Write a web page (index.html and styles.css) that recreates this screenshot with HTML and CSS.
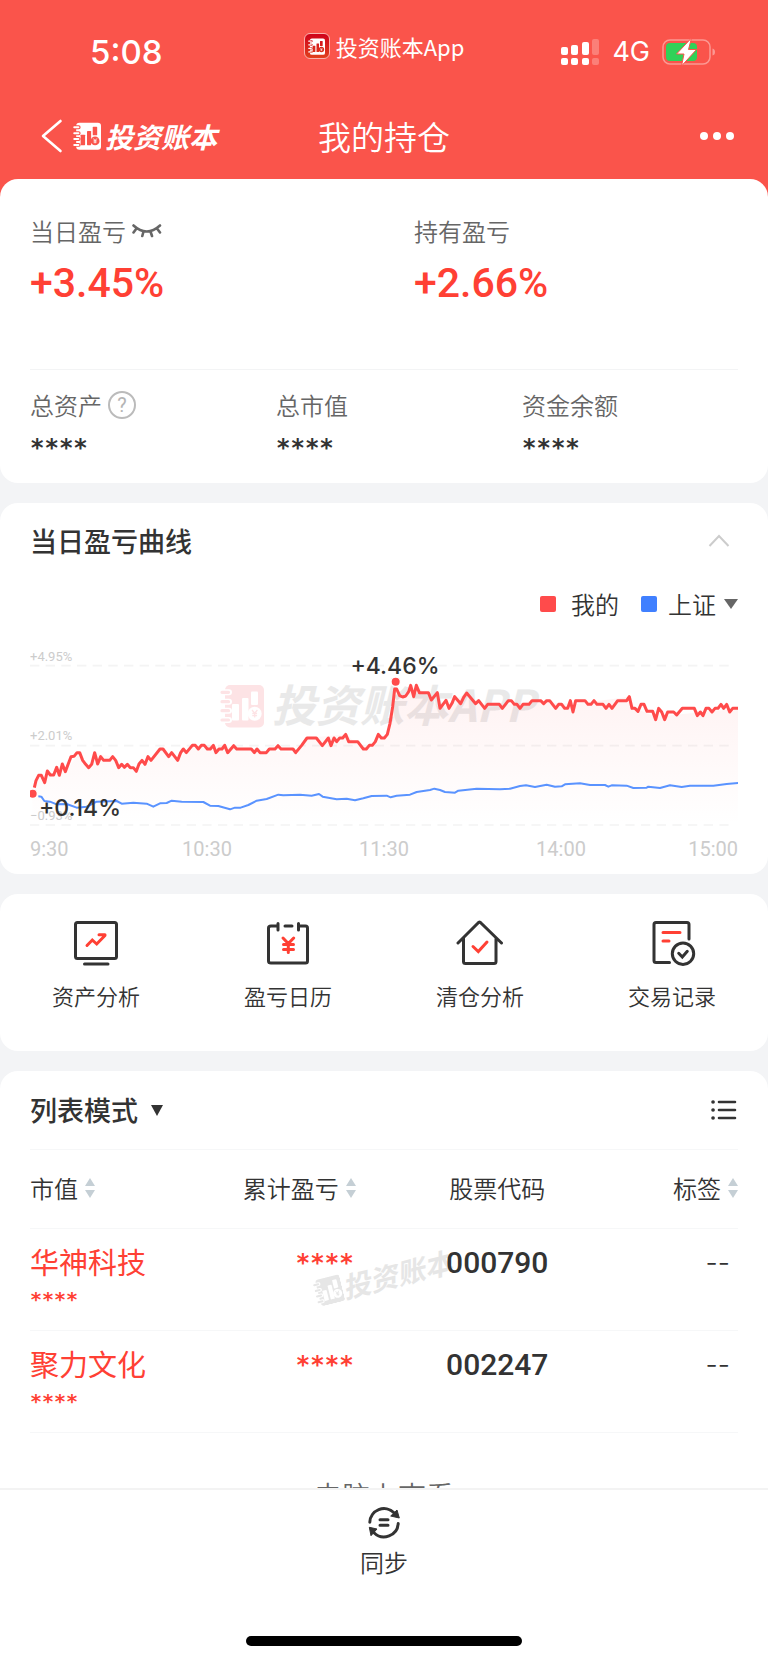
FILE: index.html
```html
<!DOCTYPE html>
<html lang="zh-CN">
<head>
    <meta charset="UTF-8">
    <meta name="viewport" content="width=device-width, initial-scale=1.0">
    <title>我的持仓</title>
    <link rel="stylesheet" href="styles.css">
</head>
<body>
    <!-- Shared symbols -->
    <svg class="symbols" aria-hidden="true">
        <mask id="book-mask" maskUnits="userSpaceOnUse" x="0" y="0" width="44" height="44">
            <rect width="44" height="44" fill="#fff"/>
            <path d="M3 8.3H9M3 17.7H9M3 26.7H9M3 36H9" stroke="#000" stroke-width="6" stroke-linecap="round"/>
            <rect x="12" y="20" width="7" height="16.500" rx="1" fill="#000"/>
            <rect x="22" y="14" width="6.500" height="22.500" rx="1" fill="#000"/>
            <rect x="31" y="7.500" width="7" height="13.500" rx="1" fill="#000"/>
            <circle cx="34.700" cy="29.700" r="7" fill="#000"/>
        </mask>
        <symbol id="book" viewBox="0 0 44 44">
            <rect x="5" y="1" width="39" height="42.500" rx="5" fill="currentColor" mask="url(#book-mask)"/>
            <path d="M2 8.300H8.500M2 17.700H8.500M2 26.700H8.500M2 36H8.500" stroke="currentColor" stroke-width="3.200" stroke-linecap="round"/>
            <path d="M32 26 34.700 29.200 37.400 26M34.700 29V33.500M32.300 29.500H37.100M32.300 31.600H37.100" fill="none" stroke="currentColor" stroke-width="1.300"/>
        </symbol>
        <symbol id="sort" viewBox="0 0 10 20">
            <path d="M5 0 10 8H0ZM5 20 0 12H10Z" fill="#c5cfd5"/>
        </symbol>
    </svg>

    <div class="page">
        <div class="scroll">
            <header class="header">
                <div class="status-bar">
                    <span class="clock">5:08</span>
                    <span class="status-app">
                        <span class="app-icon"><svg width="17" height="17"><use href="#book"/></svg></span>
                        投资账本App
                    </span>
                    <span class="status-right">
                        <svg width="40" height="28" viewBox="0 0 40 28" fill="#fff">
                            <rect x="1" y="9" width="7" height="8" rx="2"/>
                            <rect x="11" y="7" width="7" height="10" rx="2"/>
                            <rect x="22" y="4" width="7" height="13" rx="2"/>
                            <rect x="32" y="1" width="7" height="16" rx="2" opacity=".25"/>
                            <rect x="1" y="20" width="7" height="7" rx="2"/>
                            <rect x="11" y="20" width="7" height="7" rx="2"/>
                            <rect x="22" y="20" width="7" height="7" rx="2"/>
                            <rect x="32" y="20" width="7" height="7" rx="2" opacity=".25"/>
                        </svg>
                        <span class="network">4G</span>
                        <svg width="54" height="28" viewBox="0 0 54 28">
                            <rect x="1" y="2" width="47" height="24" rx="7" fill="none" stroke="#fff" stroke-opacity=".4" stroke-width="1.500"/>
                            <path d="M50.500 10.500Q53 11 53 14T50.500 17.500Z" fill="#fff" opacity=".4"/>
                            <rect x="4" y="5" width="31" height="18" rx="4" fill="#30d158"/>
                            <path d="M29.500 0 14.500 16H22L19.500 28 34.500 11.500H26.500Z" fill="#fff" stroke="#fa544b" stroke-width="1"/>
                        </svg>
                    </span>
                </div>
                <nav class="nav">
                    <a class="brand" href="#" aria-label="返回">
                        <svg width="22" height="34" viewBox="0 0 22 34">
                            <path d="M19.500 2 2 17 19.500 32" fill="none" stroke="#fff" stroke-width="2.600" stroke-linecap="round" stroke-linejoin="round"/>
                        </svg>
                        <svg class="brand-icon" width="28" height="28"><use href="#book"/></svg>
                        <span class="brand-name">投资账本</span>
                    </a>
                    <h1 class="title">我的持仓</h1>
                    <button class="icon-btn more" type="button" aria-label="更多">
                        <svg width="34" height="10" viewBox="0 0 34 10" fill="#fff">
                            <circle cx="4" cy="5" r="4"/>
                            <circle cx="17" cy="5" r="4"/>
                            <circle cx="30" cy="5" r="4"/>
                        </svg>
                    </button>
                </nav>
            </header>

            <main class="content">
                <!-- Profit summary -->
                <section class="card summary">
                    <div class="profit">
                        <div>
                            <div class="label">
                                当日盈亏
                                <button class="icon-btn" type="button" aria-label="显示金额">
                                    <svg width="30" height="16" viewBox="0 0 30 16" fill="none" stroke="#666" stroke-width="2.600" stroke-linecap="round">
                                        <path d="M1.500 2.500Q14.700 14.500 28 2.500M4.500 5.500 1.500 9.500M11.500 8.500 10.300 13M18.500 8.500 20 13M25 5.500 28 9.500"/>
                                    </svg>
                                </button>
                            </div>
                            <div class="rate">+3.45%</div>
                        </div>
                        <div>
                            <div class="label">持有盈亏</div>
                            <div class="rate">+2.66%</div>
                        </div>
                    </div>
                    <div class="assets">
                        <div>
                            <div class="label">总资产 <button class="help" type="button" aria-label="说明">?</button></div>
                            <div class="stars">****</div>
                        </div>
                        <div>
                            <div class="label">总市值</div>
                            <div class="stars">****</div>
                        </div>
                        <div>
                            <div class="label">资金余额</div>
                            <div class="stars">****</div>
                        </div>
                    </div>
                </section>

                <!-- Daily curve -->
                <section class="card curve">
                    <div class="card-head">
                        <h2 class="card-title">当日盈亏曲线</h2>
                        <button class="icon-btn collapse" type="button" aria-label="收起">
                            <svg width="22" height="14" viewBox="0 0 22 14">
                                <path d="M1.500 12 11 2 20.500 12" fill="none" stroke="#ccc" stroke-width="2"/>
                            </svg>
                        </button>
                    </div>
                    <div class="legend">
                        <span class="legend-item"><i class="swatch swatch-mine"></i>我的</span>
                        <button class="legend-item legend-index" type="button">
                            <i class="swatch swatch-index"></i>上证
                            <svg width="14" height="10" viewBox="0 0 14 10"><path d="M0 0H14L7 10Z" fill="#666"/></svg>
                        </button>
                    </div>
                    <svg class="chart" viewBox="0 0 708 223" role="img" aria-label="当日盈亏曲线">
                        <defs>
                            <linearGradient id="area" x1="0" y1="0" x2="0" y2="1">
                                <stop offset="0" stop-color="#ff4b4b" stop-opacity=".07"/>
                                <stop offset="1" stop-color="#ff4b4b" stop-opacity="0"/>
                            </linearGradient>
                        </defs>
                        <svg x="190" y="44" width="44" height="44" class="mark-icon"><use href="#book"/></svg>
                        <text class="mark-text" x="242" y="82">投资账本APP</text>
                        <g class="y-axis">
                            <text x="0" y="21">+4.95%</text>
                            <text x="0" y="100">+2.01%</text>
                            <text x="0" y="180">−0.93%</text>
                        </g>
                        <svg width="708" height="223" viewBox="90 450 2124 669">
                            <path class="grid" d="M90 527H2200M90 767H2200M90 1005H2200"/>
                            <path fill="url(#area)" d="M97 911 116 856 196 845 239 788 266 833 284 788 338 800 356 833 409 844 480 777 533 811 577 766 640 766 887 788 921 744 1037 733 1090 777 1162 733 1187 585 1208 621 1249 586 1320 655 1400 609 1454 655 1600 632 1720 643 1888 620 1905 655 1967 680 2218 655V1005H97Z"/>
                            <polyline class="line-index" points="115,919 124,920 133,933 150,935 170,943 200,942 230,953 260,950 270,945 290,935 350,933 365,941 400,938 440,941 460,950 480,940 500,939 515,932 545,935 610,936 630,947 655,948 690,958 705,953 722,953 745,945 770,932 800,927 835,914 850,916 900,914 935,917 957,912 968,920 1010,928 1040,926 1065,931 1090,925 1115,918 1160,917 1172,922 1190,917 1230,914 1250,906 1290,900 1303,896 1320,900 1335,906 1365,908 1375,902 1430,896 1500,898 1530,896 1560,888 1578,886 1605,891 1640,884 1665,890 1685,889 1695,883 1740,880 1770,885 1815,885 1825,890 1835,886 1880,887 1900,894 1940,893 1945,890 1980,894 2010,886 2045,891 2070,887 2140,887 2180,882 2218,879"/>
                            <polyline class="line-mine" points="103,893 108,872 116,856 124,856 134,878 142,843 151,855 161,855 170,832 178,856 187,822 196,845 213,800 222,799 231,788 239,788 248,811 257,823 266,833 275,823 284,788 293,822 302,800 311,811 329,811 338,800 347,811 356,833 365,823 373,832 382,823 391,833 400,833 409,844 417,822 426,811 435,823 444,800 453,811 480,777 489,777 506,800 515,788 533,811 542,788 550,777 559,788 577,766 586,766 595,777 604,766 613,766 622,777 631,777 640,766 648,788 657,777 666,777 674,766 683,788 701,767 710,777 754,777 763,788 771,777 780,788 799,788 808,777 825,777 834,767 843,777 879,777 887,788 905,766 921,744 949,744 967,767 985,744 993,767 1002,744 1010,755 1019,744 1028,744 1037,733 1046,755 1073,755 1090,777 1099,777 1108,766 1117,766 1126,755 1135,733 1144,744 1153,744 1162,733 1170,700 1178,650 1184,597 1190,597 1199,617 1208,621 1217,618 1226,605 1232,586 1241,620 1249,586 1258,608 1285,608 1294,630 1312,608 1320,655 1338,631 1347,655 1356,640 1364,620 1382,641 1391,622 1400,609 1427,641 1436,632 1454,655 1463,643 1498,643 1507,655 1525,632 1534,632 1543,643 1551,643 1560,655 1569,643 1587,643 1596,632 1622,632 1631,641 1640,632 1649,632 1667,655 1676,643 1685,643 1694,655 1703,655 1711,632 1719,666 1727,632 1755,632 1764,643 1773,643 1782,632 1791,643 1809,643 1818,655 1827,643 1836,655 1853,632 1880,632 1888,620 1896,655 1905,655 1914,664 1923,643 1932,643 1941,664 1958,664 1967,689 1976,655 1985,666 1994,689 2003,666 2021,666 2030,675 2047,655 2083,655 2092,677 2101,666 2109,677 2118,655 2127,655 2136,666 2145,655 2154,655 2163,643 2171,655 2180,643 2189,666 2198,655 2218,655"/>
                            <circle class="dot" cx="98" cy="911" r="14"/>
                            <circle class="dot" cx="1187" cy="575" r="14"/>
                        </svg>
                        <text class="point" x="365" y="34" text-anchor="middle">+4.46%</text>
                        <text class="point" x="9" y="176">+0.14%</text>
                        <g class="x-axis">
                            <text x="0" y="216">9:30</text>
                            <text x="177" y="216" text-anchor="middle">10:30</text>
                            <text x="354" y="216" text-anchor="middle">11:30</text>
                            <text x="531" y="216" text-anchor="middle">14:00</text>
                            <text x="708" y="216" text-anchor="end">15:00</text>
                        </g>
                    </svg>
                </section>

                <!-- Shortcuts -->
                <section class="card shortcuts">
                    <a class="shortcut" href="#">
                        <svg class="shortcut-icon" viewBox="0 0 48 48">
                            <rect x="3.500" y="3.500" width="41" height="36" rx="2"/>
                            <path d="M12.500 45H36"/>
                            <path class="red" d="M15 26.500 20.300 21 24.700 25 33 16.500M27 15.700H33"/>
                        </svg>
                        资产分析
                    </a>
                    <a class="shortcut" href="#">
                        <svg class="shortcut-icon" viewBox="0 0 48 48">
                            <path d="M14 7H7Q4.500 7 4.500 9V42Q4.500 44 7 44H41.500Q43.500 44 43.500 42V9Q43.500 7 41.500 7H34.500M14 4.500V11M34.500 4.500V11M21 7H28"/>
                            <path class="red" d="M19 19 24.300 24.500 29.700 19M24.300 24.500V33.500M19.500 25.500H29.500M19.500 30.500H29.500"/>
                        </svg>
                        盈亏日历
                    </a>
                    <a class="shortcut" href="#">
                        <svg class="shortcut-icon" viewBox="0 0 48 48">
                            <path d="M2 24 22 4Q23.500 2 25 4L45.500 24M7.500 19.500V42.500Q7.500 44.500 9.500 44.500H38Q40 44.500 40 42.500V19.500"/>
                            <path class="red" d="M17 27.500 22.300 32.500 31 23"/>
                        </svg>
                        清仓分析
                    </a>
                    <a class="shortcut" href="#">
                        <svg class="shortcut-icon" viewBox="0 0 48 48">
                            <path d="M41 20V5.500Q41 3.500 39 3.500H8Q6 3.500 6 5.500V41.500Q6 43.500 8 43.500H21.500M30.700 34.300 34.300 38 39.300 32.300"/>
                            <circle cx="35" cy="34.700" r="10.700"/>
                            <path class="red" d="M15 13.500H32M15 22H21"/>
                        </svg>
                        交易记录
                    </a>
                </section>

                <!-- Holdings -->
                <section class="card holdings">
                    <div class="list-head">
                        <button class="mode" type="button">
                            列表模式
                            <svg width="12" height="12" viewBox="0 0 12 12"><path d="M0 1H12L6 12Z" fill="#333"/></svg>
                        </button>
                        <button class="icon-btn" type="button" aria-label="列表设置">
                            <svg width="28" height="22" viewBox="0 0 28 22" fill="none" stroke="#333" stroke-width="2.600" stroke-linecap="round">
                                <path d="M9 3H25M9 11H25M9 19H25"/>
                                <path d="M3 3h.1M3 11h.1M3 19h.1" stroke-width="3.600"/>
                            </svg>
                        </button>
                    </div>
                    <div class="table-wrap">
                        <div class="table-mark">
                            <svg width="28" height="28"><use href="#book"/></svg>
                            <span>投资账本</span>
                        </div>
                        <table class="table">
                            <thead>
                                <tr>
                                    <th class="col-name"><button class="sort" type="button">市值<svg width="10" height="20"><use href="#sort"/></svg></button></th>
                                    <th class="col-profit"><button class="sort" type="button">累计盈亏<svg width="10" height="20"><use href="#sort"/></svg></button></th>
                                    <th class="col-code">股票代码</th>
                                    <th class="col-tag"><button class="sort" type="button">标签<svg width="10" height="20"><use href="#sort"/></svg></button></th>
                                </tr>
                            </thead>
                            <tbody>
                                <tr>
                                    <td class="col-name"><div class="name">华神科技</div><div class="stars stars-small">****</div></td>
                                    <td class="col-profit"><div class="stars">****</div></td>
                                    <td class="col-code">000790</td>
                                    <td class="col-tag">--</td>
                                </tr>
                                <tr>
                                    <td class="col-name"><div class="name">聚力文化</div><div class="stars stars-small">****</div></td>
                                    <td class="col-profit"><div class="stars">****</div></td>
                                    <td class="col-code">002247</td>
                                    <td class="col-tag">--</td>
                                </tr>
                            </tbody>
                        </table>
                    </div>
                    <a class="desktop-link" href="#">电脑上查看</a>
                </section>
            </main>
        </div>

        <footer class="footer">
            <button class="sync" type="button">
                <svg width="34" height="34" viewBox="0 0 34 34">
                    <path d="M2.800 17.300A14.200 14.200 0 0 1 27 7.700M31.200 18.500A14.200 14.200 0 0 1 7 27.700M13 14.700H21M13 20.300H21" fill="none" stroke="#333" stroke-width="3" stroke-linecap="round"/>
                    <path d="M23.700 11 30 5 32.300 13ZM2.300 22.300 10 24 4 30.700Z" fill="#333" stroke="#333" stroke-linejoin="round"/>
                </svg>
                同步
            </button>
            <div class="home-bar"></div>
        </footer>
    </div>
</body>
</html>
```
FILE: styles.css
```css
* {
    box-sizing: border-box;
}

body {
    margin: 0;
    color: #333;
    background-color: #fff;
    font-family: "Noto Sans CJK SC", sans-serif;
    font-size: 24px;
    font-weight: 350;
    line-height: 32px;
}

button {
    padding: 0;
    border: 0;
    background: none;
    color: inherit;
    font: inherit;
    cursor: pointer;
}

a {
    color: inherit;
    text-decoration: none;
}

svg {
    display: block;
    flex: none;
}

h1,
h2 {
    margin: 0;
}

.symbols {
    position: absolute;
    width: 0;
    height: 0;
}

.page {
    display: flex;
    flex-direction: column;
    height: 100vh;
}

.scroll {
    flex: 1;
    min-height: 0;
    overflow-y: auto;
    scrollbar-width: none;
    background-color: #f3f4f6;
}

.icon-btn {
    display: inline-flex;
    align-items: center;
}

/* Header */
.header {
    padding-bottom: 31px;
    background-color: #fa544b;
    color: #fff;
}

.status-bar {
    display: grid;
    grid-template-columns: 1fr auto 1fr;
    align-items: center;
    height: 104px;
    padding: 0 52px 0 90px;
}

.clock {
    font-family: Inter, sans-serif;
    font-size: 33px;
    font-weight: 500;
}

.status-app {
    display: flex;
    align-items: center;
    gap: 6px;
    margin: 0 38px 12px 0;
    font-size: 22px;
    font-weight: 400;
}

.app-icon {
    display: flex;
    align-items: center;
    justify-content: center;
    width: 26px;
    height: 26px;
    border: 1px solid #f9b0ac;
    border-radius: 6px;
    background: linear-gradient(#d0021b, #e0401c);
}

.status-right {
    display: flex;
    align-items: center;
    justify-content: flex-end;
    gap: 12px;
}

.network {
    font-family: Inter, sans-serif;
    font-size: 27px;
    font-weight: 400;
}

.nav {
    display: grid;
    grid-template-columns: 1fr auto 1fr;
    align-items: center;
    height: 64px;
    padding: 0 34px;
}

.brand {
    display: flex;
    align-items: center;
    padding-left: 7px;
}

.brand-icon {
    margin: 0 4px 0 10px;
}

.brand-name {
    font-size: 28px;
    font-style: italic;
    font-weight: 700;
}

.title {
    font-size: 33px;
    font-weight: 350;
}

.more {
    justify-self: end;
}

/* Cards */
.content {
    display: flex;
    flex-direction: column;
    gap: 20px;
    margin-top: -20px;
}

.card {
    padding: 0 30px;
    border-radius: 18px;
    background-color: #fff;
}

.card-head {
    display: flex;
    align-items: center;
    justify-content: space-between;
}

.card-title {
    font-size: 27px;
    font-weight: 500;
    line-height: 36px;
}

.label {
    display: flex;
    align-items: center;
    gap: 6px;
    color: #666;
}

/* Hidden amounts */
.stars {
    font-family: "DejaVu Sans Mono", monospace;
    font-size: 24px;
    font-weight: 700;
    line-height: 32px;
}

.stars-small {
    font-size: 20px;
    line-height: 40px;
}

/* Summary */
.profit {
    display: grid;
    grid-template-columns: 1fr 1fr;
    gap: 60px;
    padding: 36px 0 62px;
    border-bottom: 1px solid #f3f4f5;
}

.rate {
    margin-top: 12px;
    color: #ff4034;
    font-family: Roboto, sans-serif;
    font-size: 41px;
    font-weight: 500;
    line-height: 48px;
}

.assets {
    display: grid;
    grid-template-columns: repeat(3, 1fr);
    gap: 30px;
    padding: 19px 0;
}

.assets .stars {
    margin-top: 11px;
}

.help {
    width: 28px;
    height: 28px;
    border: 2px solid #bbb;
    border-radius: 50%;
    color: #b5b5b5;
    font-family: Roboto, sans-serif;
    font-size: 20px;
    font-weight: 400;
    line-height: 24px;
}

/* Daily curve */
.curve {
    padding-top: 20px;
    padding-bottom: 11px;
}

.collapse {
    margin-right: 8px;
}

.legend {
    display: flex;
    justify-content: flex-end;
    gap: 22px;
    margin: 29px 0 20px;
}

.legend-item {
    display: flex;
    align-items: center;
    gap: 15px;
}

.legend-index {
    gap: 8px;
}

.legend-index .swatch {
    margin-right: 3px;
}

.swatch {
    width: 16px;
    height: 16px;
    border-radius: 2px;
}

.swatch-mine {
    background-color: #ff4b4b;
}

.swatch-index {
    background-color: #4080ff;
}

.chart {
    width: 100%;
    height: auto;
}

.grid {
    stroke: #f4f4f4;
    stroke-width: 5;
    stroke-dasharray: 28 19;
}

.line-mine,
.line-index {
    fill: none;
    stroke-linejoin: round;
}

.line-mine {
    stroke: #ff4b4b;
    stroke-width: 9;
}

.line-index {
    stroke: #5a93ff;
    stroke-width: 6;
}

.dot {
    fill: #ff4b4b;
    stroke: #fff;
    stroke-width: 4;
}

.mark-icon {
    color: #fde3e5;
}

.mark-text {
    fill: #e9e9e9;
    font-size: 44px;
    font-style: italic;
    font-weight: 700;
}

.y-axis,
.x-axis {
    fill: #ccc;
    font-family: Roboto, sans-serif;
    font-size: 13px;
    font-weight: 400;
}

.x-axis {
    font-size: 20px;
}

.point {
    fill: #333;
    font-family: Inter, sans-serif;
    font-size: 23px;
    font-weight: 500;
}

/* Shortcuts */
.shortcuts {
    display: grid;
    grid-template-columns: repeat(4, 1fr);
    padding: 25px 0 40px;
}

.shortcut {
    display: flex;
    flex-direction: column;
    align-items: center;
    gap: 12px;
    font-size: 22px;
}

.shortcut-icon {
    width: 48px;
    height: 48px;
    fill: none;
    stroke: #333;
    stroke-width: 3;
    stroke-linecap: round;
}

.shortcut-icon .red {
    stroke: #ff4034;
}

/* Holdings */
.list-head {
    display: flex;
    align-items: center;
    justify-content: space-between;
    height: 79px;
    border-bottom: 1px solid #f6f7f8;
}

.mode {
    display: flex;
    align-items: center;
    gap: 13px;
    font-size: 27px;
    font-weight: 500;
}

.table-wrap {
    position: relative;
    z-index: 0;
}

.table-mark {
    position: absolute;
    top: 111px;
    left: 40%;
    z-index: -1;
    display: flex;
    align-items: center;
    color: #e6e6e6;
    font-size: 28px;
    font-style: italic;
    font-weight: 700;
    transform: rotate(-14deg);
}

.table {
    width: 100%;
    border-collapse: collapse;
    table-layout: fixed;
}

.table th {
    height: 78px;
    padding: 0 0 2px;
    border-bottom: 1px solid #f6f7f8;
    font-weight: 350;
}

.table td {
    height: 102px;
    padding: 14px 0 0;
    border-bottom: 1px solid #f6f7f8;
    line-height: 40px;
    vertical-align: top;
}

.sort {
    display: inline-flex;
    align-items: center;
    gap: 7px;
}

.table .col-name {
    width: 24%;
    text-align: left;
}

.table .col-profit {
    width: 22%;
    text-align: right;
}

.table .col-code {
    width: 40%;
    text-align: center;
}

.table .col-tag {
    width: 14%;
    text-align: right;
}

.name,
.table .stars {
    color: #ff4034;
}

.name {
    font-size: 29px;
    font-weight: 400;
    line-height: 36px;
}

.table td.col-profit {
    padding-right: 2px;
}

td.col-profit .stars {
    line-height: 40px;
}

td.col-code {
    font-family: Roboto, sans-serif;
    font-size: 30px;
    font-weight: 500;
}

.table td.col-tag {
    padding-right: 8px;
    font-family: Inter, sans-serif;
    font-size: 27px;
}

.desktop-link {
    display: block;
    padding: 42px 0;
    color: #666;
    font-size: 28px;
    line-height: 40px;
    text-align: center;
}

/* Footer */
.footer {
    display: flex;
    flex-direction: column;
    align-items: center;
    padding: 15px 0 17px;
    border-top: 2px solid #f3f3f3;
    background-color: #fff;
}

.sync {
    display: flex;
    flex-direction: column;
    align-items: center;
    gap: 7px;
}

.home-bar {
    width: 36%;
    height: 10px;
    margin-top: 58px;
    border-radius: 5px;
    background-color: #000;
}
```
